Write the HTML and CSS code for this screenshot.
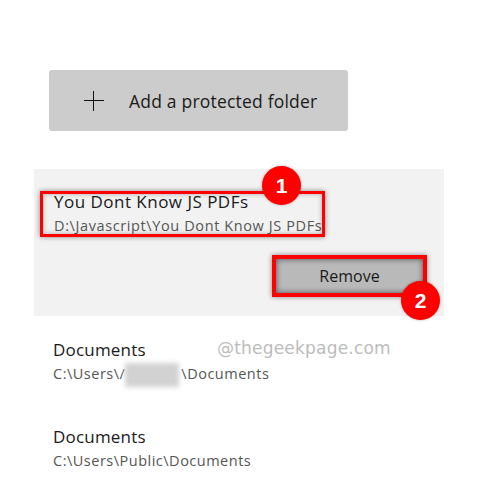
FILE: index.html
```html
<!DOCTYPE html>
<html lang="en">
<head>
<meta charset="utf-8">
<title>Protected folders</title>
<link rel="stylesheet" href="styles.css">
</head>
<body>
<main class="page">
  <button class="add-btn" type="button">
    <svg class="plus" width="20" height="20" viewBox="0 0 20 20" aria-hidden="true"><path d="M9.5 0V20M0 9.5H20" stroke="#111" stroke-width="1" fill="none" shape-rendering="crispEdges"/></svg>
    <span>Add a protected folder</span>
  </button>

  <section class="selected">
    <div class="folder-name">You Dont Know JS PDFs</div>
    <div class="folder-path">D:\Javascript\You Dont Know JS PDFs</div>
    <div class="actions"><button class="remove" type="button">Remove</button></div>
    <div class="mark mark-text"></div>
    <div class="mark mark-btn"></div>
    <div class="badge badge-1">1</div>
    <div class="badge badge-2">2</div>
  </section>

  <section class="row row-first">
    <div class="folder-name">Documents</div>
    <div class="folder-path">C:\Users\/<span class="blurred"></span>\Documents</div>
    <div class="watermark">@thegeekpage.com</div>
  </section>
  <section class="row">
    <div class="folder-name">Documents</div>
    <div class="folder-path">C:\Users\Public\Documents</div>
  </section>
</main>
</body>
</html>
```
FILE: styles.css
```css
* { box-sizing: border-box; }
html, body { margin: 0; background: #fff; }
body { width: 495px; height: 488px; overflow: hidden; font-family: "Open Sans", "Noto Sans", sans-serif; color: #1a1a1a; }
.page { padding: 70px 0 0 34px; }
button { font-family: inherit; color: inherit; border: 0; padding: 0; }
.add-btn {
  display: flex; align-items: center; gap: 25px;
  width: 299px; height: 61px; margin-left: 15px; padding-left: 35px;
  background: #cccccc; border-radius: 3px;
  font-size: 17.5px; letter-spacing: .2px;
}
.plus { flex: none; }
.selected {
  position: relative; width: 410px; height: 147px; margin-top: 38px;
  padding: 21px 0 0 20px; background: #f2f2f2;
}
.folder-name { font-size: 17px; line-height: 24px; color: #1a1a1a; letter-spacing: .2px; }
.selected .folder-name { letter-spacing: .48px; }
.folder-path { font-size: 14.5px; line-height: 20px; margin-top: 2px; color: #555; white-space: nowrap; letter-spacing: .5px; }
.selected .folder-path { letter-spacing: .61px; }
.actions { position: absolute; left: 242px; top: 90px; }
.remove { display: block; width: 147px; height: 34px; background: #b9b9b9; font-size: 16px; box-shadow: inset 0 0 6px rgba(0,0,0,.35); }
.mark { position: absolute; border-style: solid; border-color: #fe0000; box-shadow: 0 0 5px rgba(0,0,0,.45), inset 0 0 5px rgba(0,0,0,.3); }
.mark-text { left: 6px; top: 22px; width: 285px; height: 46px; border-width: 3px; }
.mark-btn { left: 238px; top: 86px; width: 155px; height: 42px; border-width: 4px; }
.badge {
  position: absolute; width: 39px; height: 39px; border-radius: 50%;
  background: #fe0000; color: #fff; font: 700 21px/39px "Liberation Sans", sans-serif; text-align: center;
  box-shadow: 0 0 3px rgba(0,0,0,.3);
}
.badge-1 { left: 228px; top: -3px; }
.badge-2 { left: 367px; top: 112px; }
.row { position: relative; padding-left: 19px; height: 87px; }
.row-first { margin-top: 22px; }
.blurred { display: inline-block; width: 54px; height: 24px; margin: -6px 2px -6px 0; vertical-align: middle; background: #d2d2d2; filter: blur(2.5px); }
.watermark { position: absolute; left: 183px; top: -2px; font: 17px/24px "DejaVu Sans", sans-serif; color: #bcbcbc; letter-spacing: .2px; white-space: nowrap; }
```
